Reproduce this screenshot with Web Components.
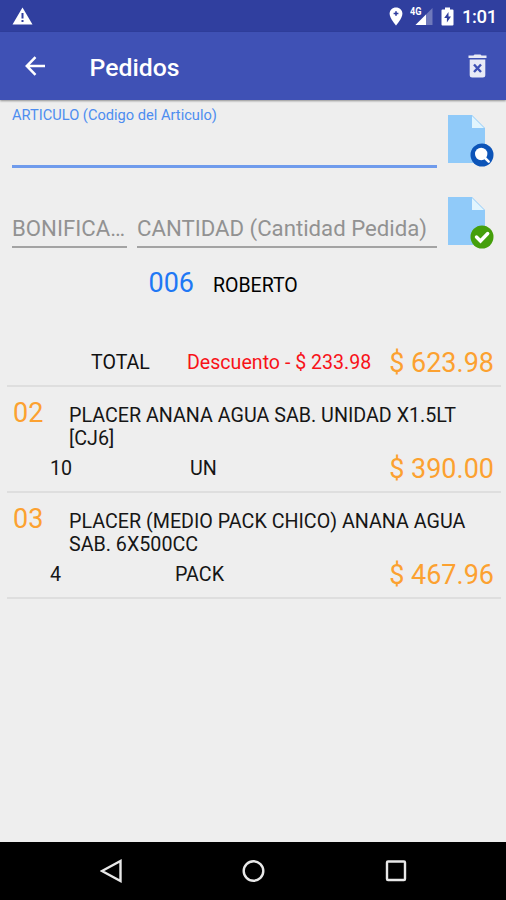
<!DOCTYPE html>
<html lang="es">
<head>
<meta charset="utf-8">
<title>Pedidos</title>
<style>
html,body{margin:0;height:100%}
body{font-family:Roboto,"Liberation Sans",sans-serif;background:#eee;color:#111;overflow:hidden}
</style>
</head>
<body>
<order-app></order-app>
<script>
const define = (name, html) => customElements.define(name, class extends HTMLElement {
  constructor() {
    super();
    this.attachShadow({ mode: 'open' }).innerHTML = typeof html === 'function' ? html(this) : html;
  }
});

define('status-bar', `
<style>
:host{display:flex;height:32px;background:#303f9f;align-items:center;color:#fff;box-sizing:border-box;padding:0 10px 0 12px}
svg{display:block;flex:none}
.gap{flex:1}
.time{font-size:18.5px;line-height:32px;font-weight:500;width:34px;margin-left:8px;white-space:nowrap;padding-top:1px;letter-spacing:-.4px}
</style>
<svg width="21" height="18" viewBox="0 0 21 18"><path d="M10.5.5 20.5 17.500H.5Z" fill="#fff"/><path d="M9.500 6h2v5.500h-2zM9.500 13h2v2h-2z" fill="#303f9f"/></svg>
<span class="gap"></span>
<svg width="14" height="19" viewBox="0 0 14 19"><path d="M7 .5C3.300.5.600 3.200.600 6.700.600 11.300 7 18.500 7 18.500s6.400-7.200 6.400-11.800C13.400 3.200 10.700.5 7 .5Z" fill="#fff"/><path d="M6.200 4.200h1.600v1.500h1.600v1.600H7.800v1.500H6.200V7.300H4.600V5.700h1.600Z" fill="#303f9f"/></svg>
<svg width="24" height="20" viewBox="0 0 24 20" style="margin-left:7px"><path d="M22.500 2v17H5.500Z" fill="#6f79bb"/><path d="M16 8.500V19H5.500Z" fill="#fff"/><text x="0" y="9" font-size="10" font-weight="700" font-family="Roboto, sans-serif" fill="#fff" textLength="11.500" lengthAdjust="spacingAndGlyphs">4G</text></svg>
<svg width="13" height="19" viewBox="0 0 13 19" style="margin-left:7px"><path d="M4 .5h5v2h2.500q1 0 1 1v14q0 1-1 1h-10q-1 0-1-1v-14q0-1 1-1H4Z" fill="#fff"/><path d="M7.500 5 3.200 11h2.700v4.500L10 9.500H7.500Z" fill="#303f9f"/></svg>
<span class="time">1:01</span>`);

define('app-toolbar', `
<style>
:host{display:flex;height:68px;background:#3f51b5;color:#fff;align-items:center;box-sizing:border-box;padding:0 19px 0 25px;box-shadow:0 1px 2px #0006;position:relative}
h1{flex:1;margin:0 0 0 43.500px;padding-top:3px;font-size:24.800px;line-height:32px;font-weight:500;letter-spacing:0}
svg{display:block}
</style>
<svg width="21" height="20" viewBox="0 0 21 20" fill="none" stroke="#fff" stroke-width="2.500"><path d="M20 10H2.500M10.500 1.200 1.800 10l8.700 8.800"/></svg>
<h1><slot></slot></h1>
<svg width="19" height="24" viewBox="0 0 19 24"><path d="M.5 1.500H5.500L6.500.5h6l1 1h5V4H.5ZM1.700 5.500h15.600V21q0 2.500-2.500 2.500H4.200Q1.700 23.500 1.700 21Z" fill="#e8eaf6"/><path d="m6 10.500 7 7.500m0-7.500L6 18" stroke="#3f51b5" stroke-width="2.400" fill="none"/></svg>`);

define('text-field', `
<style>
:host{display:flex;box-sizing:border-box;flex-direction:column;justify-content:flex-end;height:34px;border-bottom:2px solid #a3a3a3;color:#929292;font-size:22.200px;line-height:30px;min-width:0}
:host([focused]){border-bottom:3px solid #6f9bec;color:#4d8df0;font-size:14.650px;line-height:18px;height:62px;justify-content:flex-start}
div{white-space:nowrap;padding-bottom:3px}
</style><div><slot></slot></div>`);

const badges = {
  search: `<circle cx="34" cy="40" r="11.500" fill="#0c54b8"/><circle cx="33.200" cy="39" r="6.200" fill="#fff"/><path d="m37 43 3.700 3.700" stroke="#fff" stroke-width="2.500" stroke-linecap="round"/>`,
  check: `<circle cx="34" cy="40" r="11.500" fill="#459f0b"/><path d="m28.500 40 4 4 7.200-7.500" fill="none" stroke="#fff" stroke-width="3.400" stroke-linecap="round"/>`
};
define('file-button', el => `
<style>:host{display:block;width:46px;height:52px}svg{display:block}</style>
<svg width="46" height="52" viewBox="0 0 46 52"><path d="M0 0h24l13 13v35H0Z" fill="#90caf9"/><path d="M24 1v12h12Z" fill="#e1f5fe"/>${badges[el.getAttribute('kind')]}</svg>`);

define('order-form', `
<style>
:host{display:grid;grid-template-columns:115px 300px 46px;column-gap:10px;padding:6px 0 0 12px;height:148px;grid-template-rows:62px 86px;box-sizing:border-box}
.wide{grid-column:1/3}
text-field:not(.wide){align-self:start;margin-top:46px}
file-button{margin:9px 0 0 1px}
file-button.b{margin-top:29px}
</style>
<text-field class="wide" focused>ARTICULO (Codigo del Articulo)</text-field>
<file-button kind="search"></file-button>
<text-field>BONIFICA…</text-field>
<text-field>CANTIDAD (Cantidad Pedida)</text-field>
<file-button class="b" kind="check"></file-button>`);

define('customer-line', `
<style>
:host{display:flex;align-items:baseline;height:71px;padding-left:148.500px;box-sizing:border-box;line-height:36px;padding-top:17px}
.id{color:#1f78f5;font-size:27px;width:64.500px}
.name{font-size:19.500px;color:#000}
</style><span class="id"><slot name="id"></slot></span><span class="name"><slot></slot></span>`);

define('order-total', `
<style>
:host{display:flex;align-items:center;height:68px;margin:0 5px 0 7px;padding:21px 7px 0 84px;box-sizing:border-box;border-bottom:2px solid #dedede;line-height:36px;font-size:19.600px}
.label{width:96px}.discount{color:#f81218;flex:1;white-space:nowrap}.amount{color:#fca130;font-size:27px;white-space:nowrap}
</style><span class="label">TOTAL</span><span class="discount"><slot name="discount"></slot></span><span class="amount"><slot></slot></span>`);

define('order-item', `
<style>
:host{display:grid;grid-template-columns:56px 1fr;grid-template-rows:62px 1fr;height:106px;margin:0 5px 0 7px;padding:0 7px 0 6px;box-sizing:border-box;border-bottom:2px solid #dedede;font-size:19.700px;color:#161616}
.code{font-size:27px;line-height:36px;padding-top:8px;color:#fca130}
.desc{line-height:23px;padding-top:17px;white-space:pre-line}
.foot{grid-column:1/3;display:grid;grid-template-columns:37px var(--qty-width,88.500px) 130px 1fr;line-height:36px;align-items:start;padding-top:2px}
.unit{text-align:center}.amount{color:#fca130;font-size:27px;text-align:right}
</style>
<span class="code"><slot name="code"></slot></span><span class="desc"><slot></slot></span>
<div class="foot"><span></span><span><slot name="qty"></slot></span><span class="unit"><slot name="unit"></slot></span><span class="amount"><slot name="amount"></slot></span></div>`);

define('nav-bar', `
<style>
:host{display:flex;height:58px;background:#000;align-items:center;justify-content:space-between;box-sizing:border-box;padding:0 98px 0 100px}
svg{display:block;fill:none;stroke:#e8e8e8;stroke-width:2.400}
</style>
<svg width="24" height="24"><path d="M2 12 20.500 2v20Z"/></svg>
<svg width="24" height="24"><circle cx="11.500" cy="12" r="9.800"/></svg>
<svg width="24" height="24"><rect x="3" y="2.500" width="18" height="18.500" rx="1"/></svg>`);

define('order-app', `
<style>:host{display:flex;flex-direction:column;width:506px;height:900px;background:#eee}nav-bar{margin-top:auto}.narrow{--qty-width:84.500px}</style>
<status-bar></status-bar>
<app-toolbar>Pedidos</app-toolbar>
<order-form></order-form>
<customer-line><span slot="id">006</span>ROBERTO</customer-line>
<order-total><span slot="discount">Descuento - $ 233.98</span>$ 623.98</order-total>
<order-item><span slot="code">02</span>PLACER ANANA AGUA SAB. UNIDAD X1.5LT [CJ6]<span slot="qty">10</span><span slot="unit">UN</span><span slot="amount">$ 390.00</span></order-item>
<order-item class="narrow"><span slot="code">03</span>PLACER (MEDIO PACK CHICO) ANANA AGUA SAB. 6X500CC<span slot="qty">4</span><span slot="unit">PACK</span><span slot="amount">$ 467.96</span></order-item>
<nav-bar></nav-bar>`);
</script>
</body>
</html>
